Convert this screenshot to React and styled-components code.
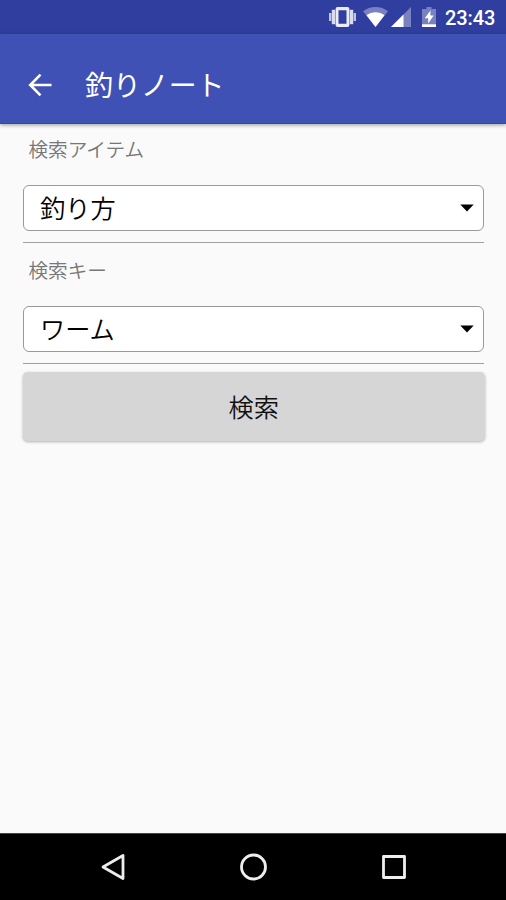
import React from "react";
import styled, { createGlobalStyle } from "styled-components";

const GlobalStyle = createGlobalStyle`
  * {
    box-sizing: border-box;
  }
  body {
    margin: 0;
    background: #fafafa;
    font-family: "Noto Sans CJK JP", sans-serif;
  }
  svg {
    display: block;
    flex: none;
  }
`;

const Screen = styled.div`
  display: flex;
  flex-direction: column;
  width: 100%;
  height: 100vh;
  overflow: hidden;
`;

const StatusBar = styled.div`
  flex: none;
  display: flex;
  align-items: center;
  justify-content: flex-end;
  height: 34px;
  padding-right: 11px;
  background: #303f9f;
  color: #fff;
`;

const StatusIcon = styled.span`
  margin-right: ${(props) => props.$gap}px;
`;

const Clock = styled.span`
  width: 50px;
  padding-top: 2px;
  font-family: Roboto, sans-serif;
  font-size: 20px;
  font-weight: 500;
  line-height: 24px;
  letter-spacing: -0.1px;
  white-space: nowrap;
`;

const AppBar = styled.header`
  flex: none;
  display: flex;
  align-items: center;
  height: 90px;
  padding: 12px 28px 0;
  background: #3f51b5;
  border-bottom: 1px solid #3547a6;
  box-shadow: 0 1px 4px rgba(0, 0, 0, 0.4);
  color: #fff;
`;

const BackButton = styled.button`
  all: unset;
  cursor: pointer;
`;

const Title = styled.h1`
  margin: 0 0 0 33px;
  padding-bottom: 1px;
  font-size: 27.9px;
  font-weight: 400;
  line-height: 40px;
`;

const Form = styled.main`
  flex: 1;
  display: flex;
  flex-direction: column;
  padding: 11px 22px 0 23px;
`;

const Field = styled.div`
  height: 121.2px;
`;

const Label = styled.label`
  display: block;
  padding-left: 5.5px;
  font-size: 19.6px;
  font-weight: 350;
  line-height: 28px;
  color: #777;
`;

const Select = styled.div`
  display: flex;
  align-items: center;
  justify-content: space-between;
  height: 46px;
  margin-top: 21.5px;
  padding: 0 9px 1px 16px;
  border: 1.5px solid #999;
  border-radius: 6px;
  background: #fff;
  font-size: 25.2px;
  font-weight: 350;
  line-height: 36px;
  color: #000;
  cursor: pointer;
`;

const Divider = styled.hr`
  height: 1.5px;
  margin: 11px 0 0;
  border: 0;
  background: #a0a0a0;
`;

const SearchButton = styled.button`
  flex: none;
  height: 69px;
  margin: -5.4px -1px 0 -0.5px;
  padding: 0 0 1px;
  border: 0;
  border-radius: 5px;
  background: #d6d6d6;
  box-shadow: 0 1px 3px rgba(0, 0, 0, 0.3);
  font-family: inherit;
  font-size: 25.2px;
  font-weight: 350;
  line-height: 36px;
  color: #111;
  cursor: pointer;
`;

const NavBar = styled.nav`
  flex: none;
  display: flex;
  align-items: center;
  justify-content: space-between;
  height: 67px;
  padding: 0 98px 0 99px;
  border-top: 1px solid #444;
  background: #000;
`;

function VibrateIcon() {
  return (
    <svg width="27" height="22" viewBox="0 0 27 22" fill="#fff">
      <rect y="7" width="2.4" height="8" opacity="0.7" />
      <rect x="2.8" y="3.8" width="3.4" height="14.4" opacity="0.82" />
      <path
        d="M8.6 1h9.8a2 2 0 0 1 2 2v16a2 2 0 0 1-2 2H8.6a2 2 0 0 1-2-2V3a2 2 0 0 1 2-2zm.9 3.2v13.6h8V4.2z"
        fillRule="evenodd"
        opacity="0.9"
      />
      <rect x="20.8" y="3.8" width="3.4" height="14.4" opacity="0.82" />
      <rect x="24.6" y="7" width="2.4" height="8" opacity="0.7" />
    </svg>
  );
}

function WifiIcon() {
  return (
    <svg width="25" height="20" viewBox="0 0 25 20" fill="#fff">
      <path d="M12.5 20 0 4.3C3.6 1.4 7.8 0 12.5 0S21.4 1.4 25 4.3z" opacity="0.35" />
      <path d="M12.5 20 3.5 8.2C6 6.2 9.2 5.2 12.5 5.2s6.500 1 9 3z" />
    </svg>
  );
}

function SignalIcon() {
  return (
    <svg width="20" height="20" viewBox="0 0 20 20" fill="#fff">
      <path d="M0 20 20 0v20z" opacity="0.35" />
      <path d="M0 20 12.5 7.5V20z" />
    </svg>
  );
}

function BatteryIcon() {
  return (
    <svg width="14" height="20" viewBox="0 0 14 20" fill="#fff">
      <path d="M4.5 0h5v2H14v16H0V2h4.5z" opacity="0.35" />
      <rect y="17.3" width="14" height="2.7" />
      <path d="M8.4 3.5 2.8 11.3h3.4v5.2l5.4-8H8.4z" />
    </svg>
  );
}

function BackArrow() {
  return (
    <svg width="24" height="24" viewBox="0 0 24 24" fill="none" stroke="#fff" strokeWidth="2.6">
      <path d="M23.5 12H2.5M12.5 1.6 2.2 12l10.3 10.4" />
    </svg>
  );
}

function Caret() {
  return (
    <svg width="14" height="10" viewBox="0 0 14 10">
      <path d="M0.3 2.5h13.4L7 9.6z" fill="#000" />
    </svg>
  );
}

const fields = [
  { label: "検索アイテム", value: "釣り方" },
  { label: "検索キー", value: "ワーム" },
];

function App() {
  return (
    <>
      <GlobalStyle />
      <Screen>
        <StatusBar>
          <StatusIcon $gap={7}>
            <VibrateIcon />
          </StatusIcon>
          <StatusIcon $gap={3}>
            <WifiIcon />
          </StatusIcon>
          <StatusIcon $gap={11}>
            <SignalIcon />
          </StatusIcon>
          <StatusIcon $gap={9}>
            <BatteryIcon />
          </StatusIcon>
          <Clock>23:43</Clock>
        </StatusBar>
        <AppBar>
          <BackButton aria-label="戻る">
            <BackArrow />
          </BackButton>
          <Title>釣りノート</Title>
        </AppBar>
        <Form>
          {fields.map((field) => (
            <Field key={field.label}>
              <Label>{field.label}</Label>
              <Select>
                {field.value}
                <Caret />
              </Select>
              <Divider />
            </Field>
          ))}
          <SearchButton>検索</SearchButton>
        </Form>
        <NavBar>
          <svg width="28" height="30" viewBox="0 0 28 30" fill="none" stroke="#eee" strokeWidth="2.8" strokeLinejoin="round">
            <path d="M24 3.5v23L4 15z" />
          </svg>
          <svg width="30" height="30" viewBox="0 0 30 30" fill="none" stroke="#eee" strokeWidth="2.8">
            <circle cx="14.5" cy="15" r="12" />
          </svg>
          <svg width="28" height="30" viewBox="0 0 28 30" fill="none" stroke="#eee" strokeWidth="2.8" strokeLinejoin="round">
            <rect x="3.5" y="4.5" width="21" height="21" />
          </svg>
        </NavBar>
      </Screen>
    </>
  );
}

export default App;
